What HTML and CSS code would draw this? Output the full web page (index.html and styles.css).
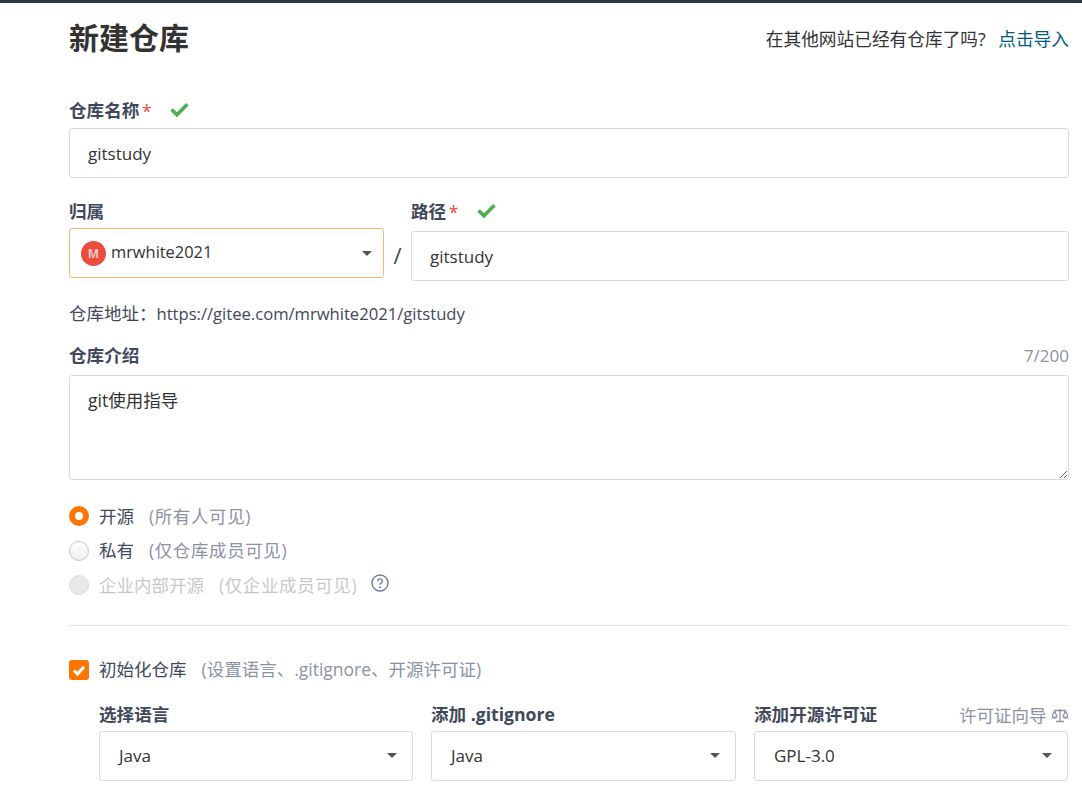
FILE: index.html
```html
<!DOCTYPE html>
<html lang="zh-CN">
<head>
  <meta charset="UTF-8" />
  <title>新建仓库</title>
  <link rel="stylesheet" href="styles.css">
</head>
<body>
  <div class="topbar"></div>
  <div class="page">
    <div class="head">
      <h1>新建仓库</h1>
      <div class="import">在其他网站已经有仓库了吗? <a href="#">点击导入</a></div>
    </div>

    <div class="field field-name">
      <div class="label">仓库名称 <span class="req">*</span>
        <svg class="ok" viewBox="0 0 18 14"><path d="M1.5 7 6.5 12 16.5 2" /></svg>
      </div>
      <input class="input" type="text" value="gitstudy">
    </div>

    <div class="owner-row">
      <div class="owner">
        <div class="label">归属</div>
        <div class="select focus">
          <span class="avatar">M</span>
          <span class="owner-name">mrwhite2021</span>
          <span class="caret"></span>
        </div>
      </div>
      <div class="slash">/</div>
      <div class="path">
        <div class="label">路径 <span class="req">*</span>
          <svg class="ok" viewBox="0 0 18 14"><path d="M1.5 7 6.5 12 16.5 2" /></svg>
        </div>
        <input class="input" type="text" value="gitstudy">
      </div>
    </div>

    <div class="address">仓库地址&#xFF1A;<span class="url">https://gitee.com/mrwhite2021/gitstudy</span></div>

    <div class="desc-head">
      <div class="label">仓库介绍</div>
      <div class="count">7/200</div>
    </div>
    <textarea class="input desc">git使用指导</textarea>

    <div class="radios">
      <div class="radio-row">
        <span class="radio on"></span>
        <span class="text">开源</span><span class="text hint">(所有人可见)</span>
      </div>
      <div class="radio-row">
        <span class="radio"></span>
        <span class="text">私有</span><span class="text hint">(仅仓库成员可见)</span>
      </div>
      <div class="radio-row disabled">
        <span class="radio"></span>
        <span class="text">企业内部开源</span><span class="text hint">(仅企业成员可见)</span>
        <svg class="help" viewBox="0 0 18 18">
          <circle cx="9" cy="9" r="8" />
          <path d="M6.6 7.2c0-1.4 1-2.3 2.4-2.3s2.4.9 2.4 2.1c0 1.9-2.4 1.9-2.4 3.7" />
          <circle class="dot" cx="9" cy="13.2" r="1" />
        </svg>
      </div>
    </div>

    <hr class="line">

    <div class="init-row">
      <span class="check">
        <svg viewBox="0 0 20 20"><path d="M5 10.5 8.5 14 15 6.8" /></svg>
      </span>
      <span class="text">初始化仓库</span><span class="text hint">(设置语言、.gitignore、开源许可证)</span>
    </div>

    <div class="init-grid">
      <div>
        <div class="label">选择语言</div>
        <div class="select"><span class="sel-text">Java</span><span class="caret"></span></div>
      </div>
      <div>
        <div class="label">添加 .gitignore</div>
        <div class="select"><span class="sel-text">Java</span><span class="caret"></span></div>
      </div>
      <div>
        <div class="label-row">
          <div class="label">添加开源许可证</div>
          <div class="guide">许可证向导
            <svg class="scale" viewBox="0 0 18 15">
              <path d="M9 1v12M5 13.500h8M3 2.500h12M3.500 3 1 8.500M3.500 3 6 8.500M14.500 3 12 8.500M14.500 3 17 8.500" />
              <path class="pan" d="M.4 8.500h6.200c-.3 3-5.900 3-6.200 0zM11.400 8.500h6.200c-.3 3-5.900 3-6.200 0z" />
            </svg>
          </div>
        </div>
        <div class="select"><span class="sel-text">GPL-3.0</span><span class="caret"></span></div>
      </div>
    </div>
  </div>
</body>
</html>
```

FILE: styles.css
```css
* { box-sizing: border-box; }
html, body {
  margin: 0;
  height: 100%;
  overflow: hidden;
  background-color: #ffffff;
}
body {
  font-family: "Open Sans", "Noto Sans CJK SC", sans-serif;
  font-size: 17.5px;
  color: #40485b;
}
.topbar {
  height: 3px;
  background-color: #2e3440;
}
.page { padding: 0 13px 0 69px; }

.head {
  display: flex;
  justify-content: space-between;
  align-items: center;
  height: 70px;
}
.head h1 {
  margin: -5px 0 0;
  font-size: 30px;
  font-weight: 700;
  color: #333333;
}
.import { margin-top: -1px; font-size: 17.7px; color: #333333; }
.import a {
  margin-left: 8px;
  color: #005980;
  text-decoration: none;
}

.label {
  height: 24px;
  font-size: 17.6px;
  font-weight: 700;
  line-height: 24px;
  color: #40485b;
}
.req {
  margin-left: -2px;
  color: #e74c3c;
  font-weight: 400;
  vertical-align: -1px;
}
.ok {
  width: 19px;
  height: 15px;
  margin-left: 14px;
  fill: none;
  stroke: #4caf50;
  stroke-width: 3.4;
}
.field-name { margin-top: 25px; }
.input {
  display: block;
  width: 100%;
  height: 50px;
  margin: 0;
  padding: 0 18px;
  border: 1px solid #dadbe6;
  border-radius: 3px;
  outline: none;
  background-color: #ffffff;
  color: #333333;
  font-family: inherit;
  font-size: 17px;
}
.field-name .input { margin-top: 6px; padding-top: 1px; }

.owner-row {
  display: flex;
  margin-top: 21px;
}
.owner { width: 315px; }
.owner .label { height: 29px; }
.slash {
  width: 27px;
  margin-top: 41px;
  text-align: center;
  font-size: 22px;
  color: #40485b;
}
.path { flex: 1; }
.path .label { height: 32px; }

.select {
  display: flex;
  align-items: center;
  height: 50px;
  padding: 0 15px 0 19px;
  border: 1px solid #dadbe6;
  border-radius: 3px;
  color: #333333;
}
.select.focus {
  padding: 0 11px;
  border-color: #fcb76f;
}
.avatar {
  flex: none;
  width: 25px;
  height: 25px;
  margin-top: 1px;
  border-radius: 50%;
  background-color: #ea4c3d;
  color: #f6c9c4;
  font-size: 12px;
  font-weight: 700;
  line-height: 25px;
  text-align: center;
}
.owner-name { margin: -4px 0 0 5px; font-size: 16.4px; }
.sel-text { font-size: 17px; }
.caret {
  width: 0;
  height: 0;
  margin-left: auto;
  border-top: 5px solid #555555;
  border-left: 5px solid transparent;
  border-right: 5px solid transparent;
}

.address {
  margin-top: 20px;
  line-height: 24px;
  color: #40485b;
}
.url { font-size: 16.6px; }
.desc-head {
  display: flex;
  justify-content: space-between;
  align-items: center;
  margin-top: 17px;
}
.count { font-size: 17px; color: #8c92a4; }
.desc {
  height: 105px;
  margin-top: 8px;
  padding: 11px 18px;
  font-size: 17.5px;
  resize: vertical;
}

.radios { margin-top: 19px; }
.radio-row {
  display: flex;
  align-items: center;
  height: 34.5px;
  color: #40485b;
}
.text { margin-top: -2px; }
.radio {
  width: 20px;
  height: 20px;
  margin-right: 10px;
  border: 1px solid #c4c6cf;
  border-radius: 50%;
  background: linear-gradient(#ffffff, #eceef2);
}
.radio.on {
  border: 6px solid #ff7500;
  background: #ffffff;
}
.hint {
  margin-left: 15px;
  color: #8c92a4;
}
.radio-row .hint { letter-spacing: 0.6px; }
.disabled .text { color: #c8c9cc; }
.disabled .radio {
  background: #e8e8ea;
  border-color: #dcdcde;
}
.help {
  width: 18px;
  height: 18px;
  margin: -5px 0 0 14px;
  fill: none;
  stroke: #6f7c9c;
  stroke-width: 1.4;
}
.help .dot { fill: #6f7c9c; stroke: none; }

.line {
  height: 1px;
  margin: 22px 0 0;
  border: 0;
  background-color: #e3e4e8;
}

.init-row {
  display: flex;
  align-items: center;
  height: 20px;
  margin-top: 34px;
}
.check {
  width: 20px;
  height: 20px;
  margin-right: 10px;
  border-radius: 3px;
  background-color: #ff7500;
}
.check svg {
  display: block;
  fill: none;
  stroke: #ffffff;
  stroke-width: 3;
}
.init-grid {
  display: grid;
  grid-template-columns: 314px 305px 314px;
  column-gap: 18px;
  margin: 22px 0 0 30px;
  width: 970px;
}
.init-grid .label, .label-row { height: 29px; }
.label-row {
  display: flex;
  justify-content: space-between;
  align-items: flex-start;
}
.guide {
  margin-right: -1px;
  line-height: 26px;
  color: #8c92a4;
}
.scale {
  width: 18px;
  height: 15px;
  vertical-align: -1px;
  fill: none;
  stroke: #8c92a4;
  stroke-width: 1.3;
}
.scale .pan { fill: #8c92a4; stroke: none; }
```
